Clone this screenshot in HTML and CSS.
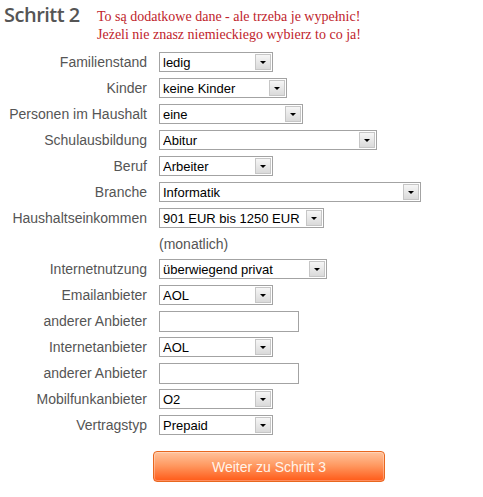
FILE: index.html
```html
<!DOCTYPE html>
<html lang="de">

<head>
  <meta charset="UTF-8">
  <meta name="viewport" content="width=device-width, initial-scale=1.0">
  <title>Schritt 2</title>
  <link rel="stylesheet" href="styles.css">
</head>

<body>
  <div class="page">
    <div class="header">
      <h1 class="title">Schritt 2</h1>
      <p class="notice">To są dodatkowe dane - ale trzeba je wypełnic!<br>Jeżeli nie znasz niemieckiego wybierz to co ja!</p>
    </div>

    <form class="form">
      <div class="row">
        <label>Familienstand</label>
        <span class="select w-113"><select><option>ledig</option></select><i class="arrow"></i></span>
      </div>
      <div class="row">
        <label>Kinder</label>
        <span class="select w-128"><select><option>keine Kinder</option></select><i class="arrow"></i></span>
      </div>
      <div class="row">
        <label>Personen im Haushalt</label>
        <span class="select w-144"><select><option>eine</option></select><i class="arrow"></i></span>
      </div>
      <div class="row">
        <label>Schulausbildung</label>
        <span class="select w-217"><select><option>Abitur</option></select><i class="arrow"></i></span>
      </div>
      <div class="row">
        <label>Beruf</label>
        <span class="select w-113"><select><option>Arbeiter</option></select><i class="arrow"></i></span>
      </div>
      <div class="row">
        <label>Branche</label>
        <span class="select w-261"><select><option>Informatik</option></select><i class="arrow"></i></span>
      </div>
      <div class="row">
        <label>Haushaltseinkommen</label>
        <span class="select w-164"><select><option>901 EUR bis 1250 EUR</option></select><i class="arrow"></i></span>
      </div>
      <div class="row note">
        <label></label>
        <span>(monatlich)</span>
      </div>
      <div class="row">
        <label>Internetnutzung</label>
        <span class="select w-167"><select><option>überwiegend privat</option></select><i class="arrow"></i></span>
      </div>
      <div class="row">
        <label>Emailanbieter</label>
        <span class="select w-113"><select><option>AOL</option></select><i class="arrow"></i></span>
      </div>
      <div class="row">
        <label>anderer Anbieter</label>
        <input type="text" class="text">
      </div>
      <div class="row">
        <label>Internetanbieter</label>
        <span class="select w-113"><select><option>AOL</option></select><i class="arrow"></i></span>
      </div>
      <div class="row">
        <label>anderer Anbieter</label>
        <input type="text" class="text">
      </div>
      <div class="row">
        <label>Mobilfunkanbieter</label>
        <span class="select w-113"><select><option>O2</option></select><i class="arrow"></i></span>
      </div>
      <div class="row">
        <label>Vertragstyp</label>
        <span class="select w-113"><select><option>Prepaid</option></select><i class="arrow"></i></span>
      </div>

      <button type="button" class="next">Weiter zu Schritt 3</button>
    </form>
  </div>
</body>

</html>
```

FILE: styles.css
```css
body {
  margin: 0;
  background-color: #fff;
  font-family: "Liberation Sans", Arial, sans-serif;
}

.page {
  width: 483px;
}

/* Kopfzeile */
.header {
  display: flex;
  align-items: flex-start;
  padding-left: 4px;
  height: 44px;
}

.header .title {
  flex: 0 0 93px;
  margin: 0;
  font-family: "Open Sans", sans-serif;
  font-size: 20px;
  font-weight: 600;
  line-height: 30px;
  color: #555;
  letter-spacing: -0.5px;
}

.header .notice {
  margin: 0;
  padding-top: 8px;
  font-family: "Liberation Serif", "Times New Roman", serif;
  font-size: 14px;
  line-height: 18px;
  color: #c0242c;
}

/* Formular */
.form {
  margin: 5px 0 0;
}

.form .row {
  display: flex;
  align-items: center;
  height: 26px;
  font-size: 14px;
}

.form .row.note {
  height: 25px;
  color: #555;
}

.form .row label {
  flex: 0 0 147px;
  margin-right: 12px;
  text-align: right;
  color: #555;
}

.select {
  position: relative;
  display: inline-block;
  height: 20px;
}

.select select {
  -webkit-appearance: none;
  appearance: none;
  box-sizing: border-box;
  width: 100%;
  height: 20px;
  margin: 0;
  padding: 0 20px 0 3px;
  border: 1px solid #a3a3a3;
  border-radius: 0;
  background-color: #fff;
  font-family: "Liberation Sans", Arial, sans-serif;
  font-size: 13px;
  color: #000;
  outline: none;
}

.select .arrow {
  position: absolute;
  top: 2px;
  right: 2px;
  box-sizing: border-box;
  width: 16px;
  height: 16px;
  border: 1px solid #c6c6c6;
  background: linear-gradient(#f6f6f6, #dadada);
  pointer-events: none;
}

.select .arrow::after {
  content: "";
  position: absolute;
  left: 4px;
  top: 6px;
  border-left: 3px solid transparent;
  border-right: 3px solid transparent;
  border-top: 3px solid #000;
}

.w-113 { width: 114px; }
.w-128 { width: 128px; }
.w-144 { width: 144px; }
.w-164 { width: 165px; }
.w-167 { width: 168px; }
.w-217 { width: 218px; }
.w-261 { width: 262px; }

.text {
  box-sizing: border-box;
  width: 140px;
  height: 21px;
  margin: 0;
  border: 1px solid #a3a3a3;
  outline: none;
}

.next {
  display: block;
  margin: 13px 0 0 153px;
  width: 232px;
  height: 31px;
  border: 1px solid #e8671f;
  border-radius: 4px;
  background: linear-gradient(#ffc39c, #ff9a62 45%, #ff5a18);
  box-shadow: inset 0 0 0 1px rgba(255, 255, 255, .3);
  font-family: "Liberation Sans", Arial, sans-serif;
  font-size: 14px;
  color: #fff4ea;
  cursor: pointer;
}
```
